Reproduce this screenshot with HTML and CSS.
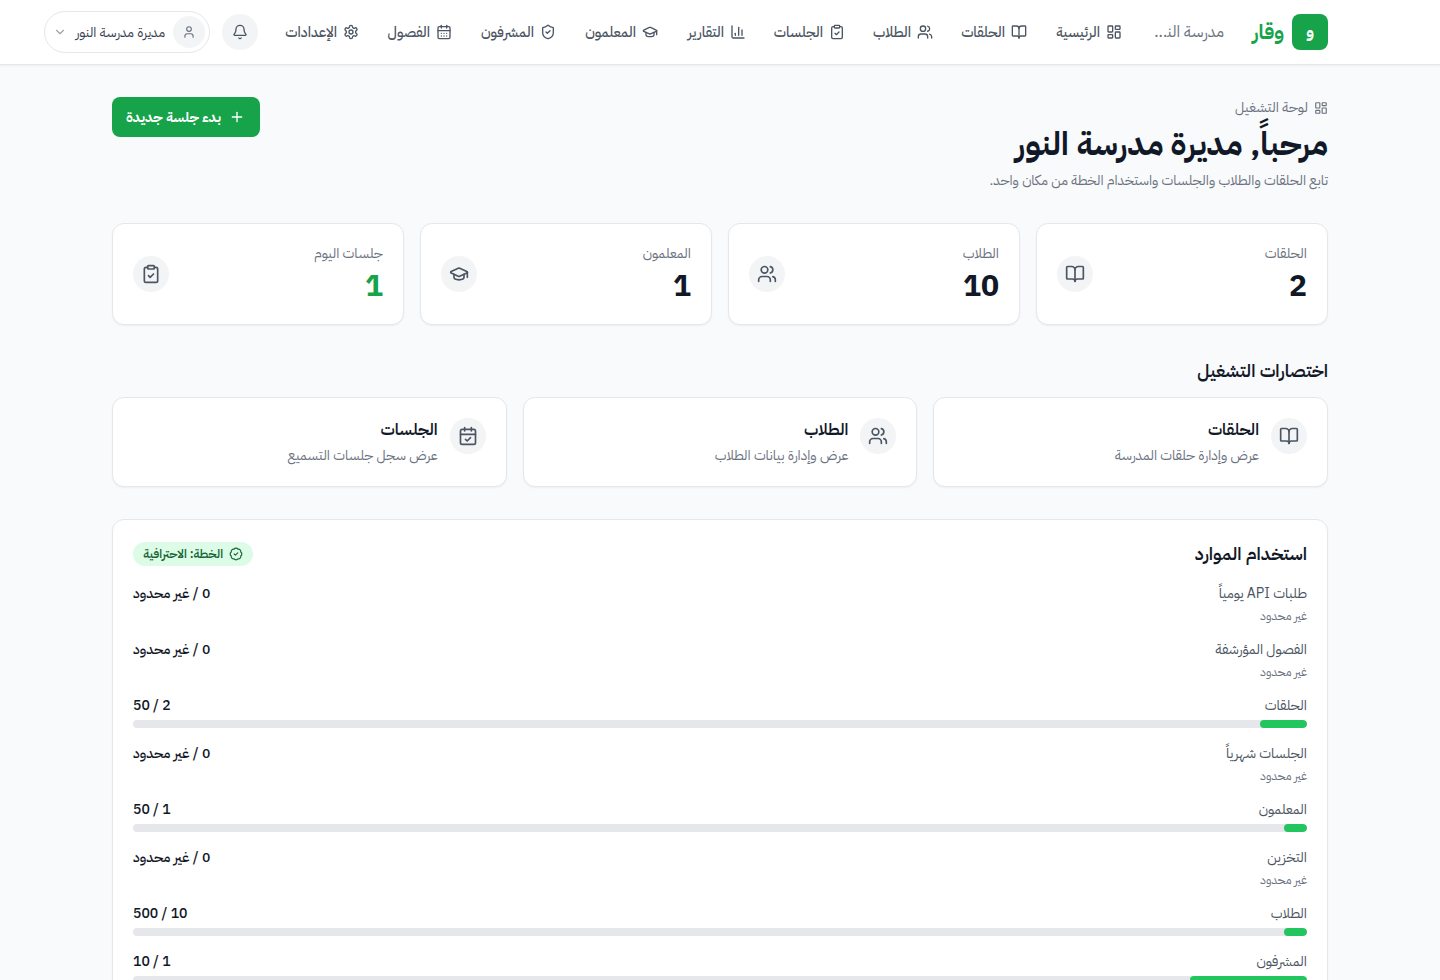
FILE: index.html
```html
<!DOCTYPE html>
<html lang="ar" dir="rtl">
<head>
    <meta charset="UTF-8">
    <meta name="viewport" content="width=device-width, initial-scale=1.0">
    <title>وقار</title>
    <link rel="stylesheet" href="styles.css">
</head>
<body>
    <!-- Icon sprite -->
    <svg class="sprite" width="0" height="0">
        <symbol id="i-dashboard" viewBox="0 0 24 24"><rect width="7" height="9" x="3" y="3" rx="1"/><rect width="7" height="5" x="14" y="3" rx="1"/><rect width="7" height="9" x="14" y="12" rx="1"/><rect width="7" height="5" x="3" y="16" rx="1"/></symbol>
        <symbol id="i-book" viewBox="0 0 24 24"><path d="M12 7v14"/><path d="M3 18a1 1 0 0 1-1-1V4a1 1 0 0 1 1-1h5a4 4 0 0 1 4 4 4 4 0 0 1 4-4h5a1 1 0 0 1 1 1v13a1 1 0 0 1-1 1h-6a3 3 0 0 0-3 3 3 3 0 0 0-3-3z"/></symbol>
        <symbol id="i-users" viewBox="0 0 24 24"><path d="M16 21v-2a4 4 0 0 0-4-4H6a4 4 0 0 0-4 4v2"/><circle cx="9" cy="7" r="4"/><path d="M22 21v-2a4 4 0 0 0-3-3.87"/><path d="M16 3.13a4 4 0 0 1 0 7.75"/></symbol>
        <symbol id="i-clipboard" viewBox="0 0 24 24"><rect width="8" height="4" x="8" y="2" rx="1"/><path d="M16 4h2a2 2 0 0 1 2 2v14a2 2 0 0 1-2 2H6a2 2 0 0 1-2-2V6a2 2 0 0 1 2-2h2"/><path d="m9 14 2 2 4-4"/></symbol>
        <symbol id="i-chart" viewBox="0 0 24 24"><path d="M3 3v16a2 2 0 0 0 2 2h16"/><path d="M18 17V9"/><path d="M13 17V5"/><path d="M8 17v-3"/></symbol>
        <symbol id="i-cap" viewBox="0 0 24 24"><path d="M21.42 10.922a1 1 0 0 0-.019-1.838L12.83 5.18a2 2 0 0 0-1.66 0L2.6 9.08a1 1 0 0 0 0 1.832l8.57 3.908a2 2 0 0 0 1.66 0z"/><path d="M22 10v6"/><path d="M6 12.5V16a6 3 0 0 0 12 0v-3.5"/></symbol>
        <symbol id="i-shield" viewBox="0 0 24 24"><path d="M20 13c0 5-3.5 7.5-7.66 8.95a1 1 0 0 1-.67-.01C7.5 20.5 4 18 4 13V6a1 1 0 0 1 1-1c2 0 4.5-1.2 6.24-2.72a1.17 1.17 0 0 1 1.52 0C14.51 3.81 17 5 19 5a1 1 0 0 1 1 1z"/><path d="m9 12 2 2 4-4"/></symbol>
        <symbol id="i-calendar" viewBox="0 0 24 24"><path d="M8 2v4"/><path d="M16 2v4"/><rect width="18" height="18" x="3" y="4" rx="2"/><path d="M3 10h18"/><path d="M8 14h.01"/><path d="M12 14h.01"/><path d="M16 14h.01"/><path d="M8 18h.01"/><path d="M12 18h.01"/><path d="M16 18h.01"/></symbol>
        <symbol id="i-calendar-check" viewBox="0 0 24 24"><path d="M8 2v4"/><path d="M16 2v4"/><rect width="18" height="18" x="3" y="4" rx="2"/><path d="M3 10h18"/><path d="m9 16 2 2 4-4"/></symbol>
        <symbol id="i-settings" viewBox="0 0 24 24"><path d="M12.22 2h-.44a2 2 0 0 0-2 2v.18a2 2 0 0 1-1 1.73l-.43.25a2 2 0 0 1-2 0l-.15-.08a2 2 0 0 0-2.73.73l-.22.38a2 2 0 0 0 .73 2.73l.15.1a2 2 0 0 1 1 1.72v.51a2 2 0 0 1-1 1.74l-.15.09a2 2 0 0 0-.73 2.73l.22.38a2 2 0 0 0 2.73.73l.15-.08a2 2 0 0 1 2 0l.43.25a2 2 0 0 1 1 1.73V20a2 2 0 0 0 2 2h.44a2 2 0 0 0 2-2v-.18a2 2 0 0 1 1-1.73l.43-.25a2 2 0 0 1 2 0l.15.08a2 2 0 0 0 2.73-.73l.22-.39a2 2 0 0 0-.73-2.73l-.15-.08a2 2 0 0 1-1-1.74v-.5a2 2 0 0 1 1-1.74l.15-.09a2 2 0 0 0 .73-2.73l-.22-.38a2 2 0 0 0-2.73-.73l-.15.08a2 2 0 0 1-2 0l-.43-.25a2 2 0 0 1-1-1.73V4a2 2 0 0 0-2-2z"/><circle cx="12" cy="12" r="3"/></symbol>
        <symbol id="i-bell" viewBox="0 0 24 24"><path d="M10.268 21a2 2 0 0 0 3.464 0"/><path d="M3.262 15.326A1 1 0 0 0 4 17h16a1 1 0 0 0 .74-1.673C19.41 13.956 18 12.499 18 8A6 6 0 0 0 6 8c0 4.499-1.411 5.956-2.738 7.326"/></symbol>
        <symbol id="i-user" viewBox="0 0 24 24"><circle cx="12" cy="7" r="4"/><path d="M19 21v-2a4 4 0 0 0-4-4H9a4 4 0 0 0-4 4v2"/></symbol>
        <symbol id="i-chevron" viewBox="0 0 24 24"><path d="m6 9 6 6 6-6"/></symbol>
        <symbol id="i-plus" viewBox="0 0 24 24"><path d="M5 12h14"/><path d="M12 5v14"/></symbol>
        <symbol id="i-badge" viewBox="0 0 24 24"><path d="M3.85 8.62a4 4 0 0 1 4.78-4.77 4 4 0 0 1 6.74 0 4 4 0 0 1 4.78 4.78 4 4 0 0 1 0 6.74 4 4 0 0 1-4.77 4.78 4 4 0 0 1-6.75 0 4 4 0 0 1-4.78-4.77 4 4 0 0 1 0-6.76Z"/><path d="m9 12 2 2 4-4"/></symbol>
    </svg>

    <header class="header">
        <a class="logo"><span class="logo-mark">و</span><span class="logo-name">وقار</span></a>
        <span class="school">مدرسة الن&zwj;...</span>
        <nav class="nav">
            <a class="w67"><svg class="icon"><use href="#i-dashboard"/></svg><span>الرئيسية</span></a>
            <a class="w66"><svg class="icon"><use href="#i-book"/></svg><span>الحلقات</span></a>
            <a class="w60"><svg class="icon"><use href="#i-users"/></svg><span>الطلاب</span></a>
            <a class="w71"><svg class="icon"><use href="#i-clipboard"/></svg><span>الجلسات</span></a>
            <a class="w60"><svg class="icon"><use href="#i-chart"/></svg><span>التقارير</span></a>
            <a class="w74"><svg class="icon"><use href="#i-cap"/></svg><span>المعلمون</span></a>
            <a class="w76"><svg class="icon"><use href="#i-shield"/></svg><span>المشرفون</span></a>
            <a class="w65"><svg class="icon"><use href="#i-calendar"/></svg><span>الفصول</span></a>
            <a class="w73"><svg class="icon"><use href="#i-settings"/></svg><span>الإعدادات</span></a>
        </nav>
        <div class="actions">
            <button class="bell"><svg class="icon"><use href="#i-bell"/></svg></button>
            <button class="user">
                <span class="avatar"><svg class="icon"><use href="#i-user"/></svg></span>
                <span class="user-name">مديرة مدرسة النور</span>
                <svg class="icon chevron"><use href="#i-chevron"/></svg>
            </button>
        </div>
    </header>

    <main class="main">
        <div class="page-head">
            <div>
                <p class="eyebrow"><svg class="icon"><use href="#i-dashboard"/></svg>لوحة التشغيل</p>
                <h1>مرحباً, مديرة مدرسة النور</h1>
                <p class="lead">تابع الحلقات والطلاب والجلسات واستخدام الخطة من مكان واحد.</p>
            </div>
            <button class="primary"><svg class="icon"><use href="#i-plus"/></svg><span>بدء جلسة جديدة</span></button>
        </div>

        <section class="stats">
            <div class="card stat">
                <div><p>الحلقات</p><strong>2</strong></div>
                <span class="circle"><svg class="icon"><use href="#i-book"/></svg></span>
            </div>
            <div class="card stat">
                <div><p>الطلاب</p><strong>10</strong></div>
                <span class="circle"><svg class="icon"><use href="#i-users"/></svg></span>
            </div>
            <div class="card stat">
                <div><p>المعلمون</p><strong>1</strong></div>
                <span class="circle"><svg class="icon"><use href="#i-cap"/></svg></span>
            </div>
            <div class="card stat">
                <div><p>جلسات اليوم</p><strong class="green">1</strong></div>
                <span class="circle"><svg class="icon"><use href="#i-clipboard"/></svg></span>
            </div>
        </section>

        <h2 class="shortcuts-title">اختصارات التشغيل</h2>
        <section class="shortcuts">
            <a class="card shortcut">
                <span class="circle"><svg class="icon"><use href="#i-book"/></svg></span>
                <div><h3>الحلقات</h3><p>عرض وإدارة حلقات المدرسة</p></div>
            </a>
            <a class="card shortcut">
                <span class="circle"><svg class="icon"><use href="#i-users"/></svg></span>
                <div><h3>الطلاب</h3><p>عرض وإدارة بيانات الطلاب</p></div>
            </a>
            <a class="card shortcut">
                <span class="circle"><svg class="icon"><use href="#i-calendar-check"/></svg></span>
                <div><h3>الجلسات</h3><p>عرض سجل جلسات التسميع</p></div>
            </a>
        </section>

        <section class="card usage">
            <div class="usage-head">
                <h2>استخدام الموارد</h2>
                <span class="plan"><svg class="icon"><use href="#i-badge"/></svg><span>الخطة: الاحترافية</span></span>
            </div>
            <div class="usage-list">
                <div>
                    <div class="row"><span>طلبات API يومياً</span><b>0 / غير محدود</b></div>
                    <p class="note">غير محدود</p>
                </div>
                <div>
                    <div class="row"><span>الفصول المؤرشفة</span><b>0 / غير محدود</b></div>
                    <p class="note">غير محدود</p>
                </div>
                <div>
                    <div class="row"><span>الحلقات</span><b>2 / 50</b></div>
                    <div class="bar"><div class="fill" style="width: 4%"></div></div>
                </div>
                <div>
                    <div class="row"><span>الجلسات شهرياً</span><b>0 / غير محدود</b></div>
                    <p class="note">غير محدود</p>
                </div>
                <div>
                    <div class="row"><span>المعلمون</span><b>1 / 50</b></div>
                    <div class="bar"><div class="fill" style="width: 2%"></div></div>
                </div>
                <div>
                    <div class="row"><span>التخزين</span><b>0 / غير محدود</b></div>
                    <p class="note">غير محدود</p>
                </div>
                <div>
                    <div class="row"><span>الطلاب</span><b>10 / 500</b></div>
                    <div class="bar"><div class="fill" style="width: 2%"></div></div>
                </div>
                <div>
                    <div class="row"><span>المشرفون</span><b>1 / 10</b></div>
                    <div class="bar"><div class="fill" style="width: 10%"></div></div>
                </div>
            </div>
        </section>
    </main>
</body>
</html>
```
FILE: styles.css
```css
* {
    box-sizing: border-box;
    margin: 0;
    padding: 0;
}

html {
    overflow: hidden;
}

body {
    height: 980px;
    overflow: hidden;
    background-color: #f9fafb;
    color: #111827;
    font-family: "IBM Plex Sans Arabic", "Noto Sans", "DejaVu Sans", sans-serif;
    font-size: 14px;
    line-height: 20px;
}

button {
    border: none;
    font-family: inherit;
    cursor: pointer;
}

.sprite {
    position: absolute;
}

.icon {
    width: 16px;
    height: 16px;
    flex-shrink: 0;
    fill: none;
    stroke: currentColor;
    stroke-width: 2;
    stroke-linecap: round;
    stroke-linejoin: round;
}

/* Header */
.header {
    display: flex;
    align-items: center;
    height: 65px;
    padding: 0 112px 0 44px;
    background-color: #ffffff;
    border-bottom: 1px solid #e5e7eb;
    box-shadow: 0 1px 2px rgba(0, 0, 0, 0.05);
    white-space: nowrap;
}

.logo {
    display: flex;
    align-items: center;
    gap: 8px;
    width: 77px;
    color: #16a34a;
}

.logo-mark {
    display: flex;
    align-items: center;
    justify-content: center;
    width: 36px;
    height: 36px;
    flex-shrink: 0;
    border-radius: 8px;
    background-color: #16a34a;
    color: #ffffff;
    font-size: 16px;
    font-weight: 700;
}

.logo-name {
    font-size: 20.3px;
    font-weight: 700;
}

.school {
    width: 74px;
    margin-right: 27px;
    color: #6b7280;
    font-size: 16px;
    line-height: 24px;
}

.nav {
    display: flex;
    gap: 28px;
    margin-right: 28px;
}

.nav a {
    display: flex;
    align-items: center;
    gap: 6px;
    color: #4b5563;
    font-size: 14.2px;
    font-weight: 500;
}

.nav span {
    padding-top: 1px;
}

.w60 { width: 60px; }
.w65 { width: 65px; }
.w66 { width: 66px; }
.w67 { width: 67px; }
.w71 { width: 71px; }
.w73 { width: 73px; }
.w74 { width: 74px; }
.w76 { width: 76px; }

.actions {
    display: flex;
    align-items: center;
    gap: 12px;
    margin-right: auto;
}

.bell {
    display: flex;
    align-items: center;
    justify-content: center;
    width: 36px;
    height: 36px;
    border-radius: 50%;
    background-color: #f3f4f6;
    color: #4b5563;
}

.user {
    display: flex;
    align-items: center;
    gap: 8px;
    width: 166px;
    height: 42px;
    padding: 4px;
    border: 1px solid #e5e7eb;
    border-radius: 21px;
    background-color: #ffffff;
    color: #374151;
    font-size: 13.7px;
    white-space: nowrap;
}

.avatar {
    display: flex;
    align-items: center;
    justify-content: center;
    width: 32px;
    height: 32px;
    flex-shrink: 0;
    border-radius: 50%;
    background-color: #f3f4f6;
    color: #6b7280;
}

.avatar .icon {
    width: 14px;
    height: 14px;
}

.user-name {
    width: 90px;
    text-align: right;
}

.user .chevron {
    width: 14px;
    height: 14px;
    color: #9ca3af;
}

/* Page head */
.main {
    width: 1216px;
    margin: 0 auto;
    padding-top: 32px;
}

.page-head {
    display: flex;
    align-items: flex-start;
    justify-content: space-between;
    height: 94px;
    margin-bottom: 32px;
}

.eyebrow {
    display: flex;
    align-items: center;
    gap: 6px;
    height: 21px;
    color: #6b7280;
    font-size: 14.1px;
}

.eyebrow .icon {
    width: 14px;
    height: 14px;
}

h1 {
    height: 48px;
    margin-top: 2px;
    font-size: 32.2px;
    font-weight: 700;
    line-height: 48px;
}

.lead {
    margin-top: 3px;
    color: #6b7280;
    font-size: 13.9px;
}

.primary {
    display: flex;
    align-items: center;
    gap: 8px;
    width: 148px;
    height: 40px;
    padding: 0 15px;
    border-radius: 8px;
    background-color: #16a34a;
    color: #ffffff;
    font-size: 13.9px;
    font-weight: 700;
    white-space: nowrap;
}

/* Cards */
.card {
    background-color: #ffffff;
    border: 1px solid #e5e7eb;
    border-radius: 12px;
    box-shadow: 0 1px 2px rgba(0, 0, 0, 0.05);
}

.circle {
    display: flex;
    align-items: center;
    justify-content: center;
    width: 36px;
    height: 36px;
    flex-shrink: 0;
    border-radius: 50%;
    background-color: #f3f4f6;
    color: #4b5563;
}

.circle .icon {
    width: 20px;
    height: 20px;
}

.stats {
    display: grid;
    grid-template-columns: repeat(4, 1fr);
    gap: 16px;
}

.stat {
    display: flex;
    align-items: center;
    justify-content: space-between;
    height: 102px;
    padding: 0 20px;
}

.stat p {
    color: #6b7280;
    font-size: 14px;
}

.stat strong {
    display: block;
    margin-top: 4px;
    font-size: 30px;
    line-height: 36px;
}

.stat .green {
    color: #16a34a;
}

h2 {
    font-size: 18px;
    font-weight: 600;
    line-height: 28px;
}

.shortcuts-title {
    margin: 32px 0 12px;
}

.shortcuts {
    display: grid;
    grid-template-columns: repeat(3, 1fr);
    gap: 16px;
}

.shortcut {
    display: flex;
    align-items: flex-start;
    gap: 12px;
    height: 90px;
    padding: 20px;
}

.shortcut h3 {
    font-size: 16.3px;
    font-weight: 600;
    line-height: 24px;
}

.shortcut p {
    margin-top: 4px;
    color: #6b7280;
    font-size: 13.9px;
}

/* Usage */
.usage {
    height: 520px;
    margin-top: 32px;
    padding: 20px;
}

.usage-head {
    display: flex;
    align-items: center;
    justify-content: space-between;
    height: 28px;
    margin-bottom: 16px;
}

.plan {
    display: flex;
    align-items: center;
    gap: 6px;
    width: 120px;
    height: 24px;
    padding: 0 10px;
    border-radius: 12px;
    background-color: #dcfce7;
    color: #166534;
    font-size: 12.2px;
    font-weight: 600;
    white-space: nowrap;
}

.plan .icon {
    width: 14px;
    height: 14px;
}

.usage-list {
    display: flex;
    flex-direction: column;
    gap: 16px;
}

.row {
    display: flex;
    justify-content: space-between;
    height: 20px;
    color: #4b5563;
    font-size: 14px;
}

.row b {
    color: #111827;
    font-weight: 500;
}

.note {
    height: 16px;
    margin-top: 4px;
    color: #6b7280;
    font-size: 12px;
    line-height: 16px;
}

.bar {
    height: 8px;
    margin-top: 4px;
    overflow: hidden;
    border-radius: 4px;
    background-color: #e5e7eb;
}

.fill {
    height: 8px;
    border-radius: 4px;
    background-color: #22c55e;
}
```
